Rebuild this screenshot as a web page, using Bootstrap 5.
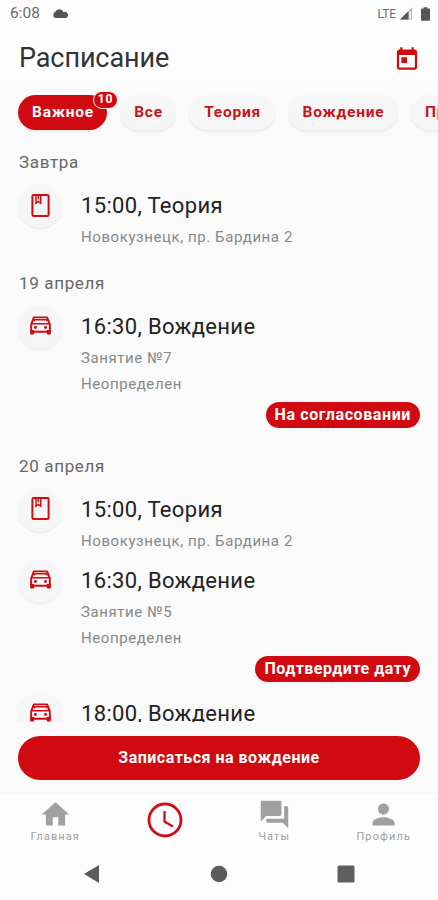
<!DOCTYPE html>
<html lang="ru">
<head>
<meta charset="utf-8">
<meta name="viewport" content="width=device-width, initial-scale=1">
<title>Расписание</title>
<link href="https://cdn.jsdelivr.net/npm/bootstrap@5.3.0/dist/css/bootstrap.min.css" rel="stylesheet">
<style>
:root{--brand:#d10a11}
body{font-family:Roboto,"Noto Sans",sans-serif;background:#fafafa;color:#1c1c1c}
.screen{height:900px;width:438px}
.topbar{background:#fdfdfd}
.statusbar{height:28px;padding:0 8px 0 10px;color:#6c6c6c;font-size:15.5px}
.lte{font-size:12px;letter-spacing:-.1px}
.heading{height:59px;padding:0 17px 0 19px}
.heading h1{font-size:27px;line-height:32px;letter-spacing:-.1px;font-weight:400;color:#333}
.red{color:var(--brand)}
.filters{height:51px;padding:8px 0 0 18px;gap:13px}
.chip{height:35px;border-radius:18px;background:#f6f6f6;color:#c4161c;font-weight:700;font-size:15.5px;letter-spacing:.75px;box-shadow:0 1.5px 2px rgba(0,0,0,.07);border:0;padding:1px 0 0 1px}
.chip.on{background:var(--brand);color:#fff;width:89px}
.w-all{width:56px}.w-theory{width:86px}.w-drive{width:110px}.w-pr{width:80px}
.chip.w-pr{padding-left:14px}
.count{top:-4px;left:75px;width:25px;height:18px;border-radius:9px;background:var(--brand);border:1.5px solid #fbe9e9;font-size:12px;letter-spacing:.8px;line-height:15px;color:#fff}
.agenda{height:584px;padding:12px 18px 0 18px}
.day{font-size:17px;line-height:24px;letter-spacing:.65px;color:#686868;margin-bottom:16px;padding-left:1px}
.entry{gap:19px}
.disc{width:44px;height:44px;border-radius:50%;background:#f6f6f6;box-shadow:0 1.5px 2px rgba(0,0,0,.06);margin-top:-6px}
.disc svg{margin-top:-2px}
.what{font-size:22px;line-height:32px;letter-spacing:.33px;color:#222;margin-bottom:2px}
.where{font-size:15px;line-height:26.5px;letter-spacing:.58px;color:#888}
.state{height:26px;border-radius:13px;background:var(--brand);color:#fff;font-weight:700;font-size:16px;letter-spacing:.6px;padding:0 9px;margin-top:4px}
.state.long{letter-spacing:.5px}
.gap-day{margin-bottom:20px}.gap-state{margin-bottom:26px}.gap-entry{margin-bottom:10.500px}.gap-last{margin-bottom:16px}
.book{height:44px;border-radius:22px;margin:14px 18px 0;background:var(--brand);color:#fff;font-weight:700;font-size:16px;letter-spacing:.5px;border:0;padding:0}
.book:hover{background:#b8090f;color:#fff}
.tabs{height:57px;margin-top:14px;background:#fdfdfd;color:#a0a0a0;box-shadow:0 -1px 3px rgba(0,0,0,.02);font-size:11px;letter-spacing:1.1px}
.tabs a{color:inherit;text-decoration:none;line-height:14px;padding:4px 0 0 1px}
.tabs svg{height:33px;margin-bottom:-1px}
.tabs svg.clock{height:38px;color:#cc1016;margin:3px 0 0}
.sysbar{height:45px;background:#fdfdfd;padding:0 29px}
.sysfill{background:#fdfdfd}
</style>
<script src="https://cdn.jsdelivr.net/npm/bootstrap@5.3.0/dist/js/bootstrap.bundle.min.js"></script>
</head>
<body>
<svg class="d-none">
  <symbol id="i-book" viewBox="0 0 24 24"><rect x="4.800" y="2.600" width="14.400" height="18.800" rx="1.200" fill="none" stroke="currentColor" stroke-width="1.800"/><path d="M8 3v7l2.100-1.700 2.100 1.700V3M10.100 3v3.500" fill="none" stroke="currentColor" stroke-width="1.300"/></symbol>
  <symbol id="i-car" viewBox="0 0 24 24"><g fill="none" stroke="currentColor"><path stroke-width="1.700" stroke-linejoin="round" d="M3.700 17.500V11l2.400-6.200h11.800L20.300 11v6.500z"/><path stroke-width="1.300" d="M4.500 10.500h15M6 8.300l.8-1.400h10.400l.8 1.400"/></g><path fill="currentColor" d="M2.800 16h3.600v3.300a.7.7 0 0 1-.7.700H3.500a.7.7 0 0 1-.7-.7zM17.600 16h3.600v3.300a.7.7 0 0 1-.7.700h-2.200a.7.7 0 0 1-.7-.7z"/><circle cx="7.500" cy="13.700" r="1.300" fill="currentColor"/><circle cx="16.500" cy="13.700" r="1.300" fill="currentColor"/></symbol>
</svg>
<main class="screen d-flex flex-column overflow-hidden">
  <header>
    <div class="topbar">
      <div class="statusbar d-flex align-items-center">
        <span>6:08</span>
        <svg class="ms-2" width="24" height="16" viewBox="0 0 24 16"><path fill="#555" d="M7.500 12a3.300 3.300 0 0 1-.2-6.200A4.500 4.500 0 0 1 15.500 6a3 3 0 0 1 2.500 6z"/></svg>
        <span class="lte ms-auto me-1">LTE</span>
        <svg width="13" height="14" viewBox="0 0 14 14"><path fill="#aaa" d="M0 13 13 0v13z"/><path fill="#555" d="M0 13 9 4v9z"/><path fill="#fdfdfd" d="M10 4h2v8h-2z"/></svg>
        <svg class="ms-2" width="9" height="14" viewBox="0 0 10 15"><path fill="#555" d="M3 0h4v1.500h2a1 1 0 0 1 1 1V14a1 1 0 0 1-1 1H1a1 1 0 0 1-1-1V2.500a1 1 0 0 1 1-1h2z"/></svg>
      </div>
      <div class="heading d-flex align-items-center justify-content-between">
        <h1 class="mb-0">Расписание</h1>
        <svg class="red mt-1" width="28" height="27" viewBox="0 0 24 24"><path fill="currentColor" d="M19 3h-1V1h-2v2H8V1H6v2H5c-1.110 0-1.990.9-1.990 2L3 19c0 1.100.89 2 2 2h14c1.100 0 2-.9 2-2V5c0-1.100-.9-2-2-2zm0 16H5V8h14v11zM7 10h5v5H7z"/></svg>
      </div>
    </div>
    <div class="filters d-flex overflow-hidden">
      <button class="chip on flex-shrink-0 position-relative">Важное<span class="count position-absolute">10</span></button>
      <button class="chip w-all flex-shrink-0">Все</button>
      <button class="chip w-theory flex-shrink-0">Теория</button>
      <button class="chip w-drive flex-shrink-0">Вождение</button>
      <button class="chip w-pr flex-shrink-0 text-start">Практика</button>
    </div>
  </header>

  <section class="agenda flex-shrink-0 overflow-hidden">
    <div class="day">Завтра</div>
    <div class="entry d-flex gap-day">
      <div class="disc d-flex align-items-center justify-content-center flex-shrink-0 red"><svg width="27" height="27"><use href="#i-book"/></svg></div>
      <div><div class="what">15:00, Теория</div><div class="where">Новокузнецк, пр. Бардина 2</div></div>
    </div>

    <div class="day">19 апреля</div>
    <div class="entry d-flex">
      <div class="disc d-flex align-items-center justify-content-center flex-shrink-0 red"><svg width="27" height="27"><use href="#i-car"/></svg></div>
      <div><div class="what">16:30, Вождение</div><div class="where">Занятие №7</div><div class="where">Неопределен</div></div>
    </div>
    <div class="d-flex justify-content-end gap-state"><span class="state d-flex align-items-center">На согласовании</span></div>

    <div class="day">20 апреля</div>
    <div class="entry d-flex gap-entry">
      <div class="disc d-flex align-items-center justify-content-center flex-shrink-0 red"><svg width="27" height="27"><use href="#i-book"/></svg></div>
      <div><div class="what">15:00, Теория</div><div class="where">Новокузнецк, пр. Бардина 2</div></div>
    </div>
    <div class="entry d-flex">
      <div class="disc d-flex align-items-center justify-content-center flex-shrink-0 red"><svg width="27" height="27"><use href="#i-car"/></svg></div>
      <div><div class="what">16:30, Вождение</div><div class="where">Занятие №5</div><div class="where">Неопределен</div></div>
    </div>
    <div class="d-flex justify-content-end gap-last"><span class="state long d-flex align-items-center">Подтвердите дату</span></div>
    <div class="entry d-flex">
      <div class="disc d-flex align-items-center justify-content-center flex-shrink-0 red"><svg width="27" height="27"><use href="#i-car"/></svg></div>
      <div class="what">18:00, Вождение</div>
    </div>
  </section>

  <button class="btn book flex-shrink-0">Записаться на вождение</button>

  <nav class="tabs d-flex flex-shrink-0">
    <a href="#" class="col-3 d-flex flex-column align-items-center"><svg viewBox="0 0 24 24"><path fill="currentColor" d="M10 20v-6h4v6h5v-8h3L12 3 2 12h3v8z"/></svg>Главная</a>
    <a href="#" class="col-3 d-flex flex-column align-items-center"><svg class="clock" viewBox="0 0 38 38" fill="none" stroke="currentColor"><circle cx="19" cy="19" r="16" stroke-width="2.800"/><path d="M18.500 10v10.500l8.500 5" stroke-width="2.300"/></svg></a>
    <a href="#" class="col-3 d-flex flex-column align-items-center"><svg viewBox="0 0 24 24"><path fill="currentColor" d="M21 6h-2v9H6v2c0 .55.45 1 1 1h11l4 4V7c0-.55-.45-1-1-1zm-4 6V3c0-.55-.45-1-1-1H3c-.55 0-1 .45-1 1v14l4-4h10c.55 0 1-.45 1-1z"/></svg>Чаты</a>
    <a href="#" class="col-3 d-flex flex-column align-items-center"><svg viewBox="0 0 24 24"><path fill="currentColor" d="M12 12c2.210 0 4-1.790 4-4s-1.790-4-4-4-4 1.790-4 4 1.790 4 4 4zm0 2c-2.670 0-8 1.340-8 4v2h16v-2c0-2.660-5.330-4-8-4z"/></svg>Профиль</a>
  </nav>
  <div class="sysbar d-flex align-items-center justify-content-around flex-shrink-0">
    <svg width="18" height="20" viewBox="0 0 18 20"><path fill="#5c5c5c" d="M16 1v18L1 10z"/></svg>
    <svg width="18" height="18"><circle cx="9" cy="9" r="8.300" fill="#5c5c5c"/></svg>
    <svg width="18" height="18"><rect x=".5" y=".5" width="17" height="17" rx="1.500" fill="#5f5f5f"/></svg>
  </div>
  <div class="sysfill flex-grow-1"></div>
</main>
</body>
</html>
